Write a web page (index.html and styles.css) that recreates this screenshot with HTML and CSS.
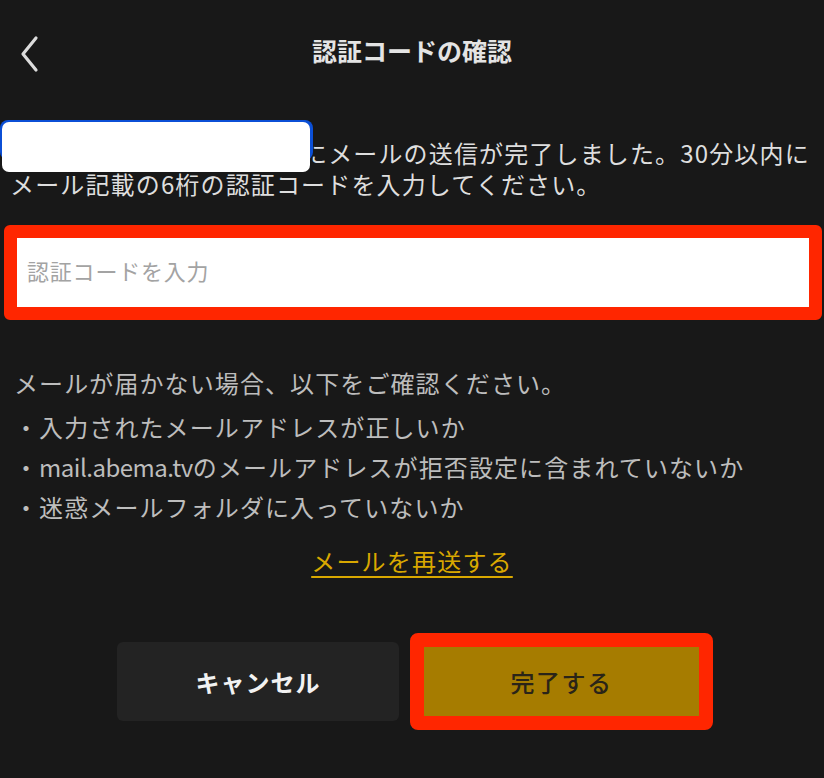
FILE: index.html
```html
<!DOCTYPE html>
<html lang="ja">
<head>
<meta charset="utf-8">
<title>認証コードの確認</title>
<link rel="stylesheet" href="styles.css">
</head>
<body>
<div class="screen">
  <header class="header">
    <button class="back" aria-label="戻る">
      <svg width="24" height="40" viewBox="0 0 24 40"><polyline points="18,4 5,20 18,36" fill="none" stroke="#dcdcdc" stroke-width="3.2" stroke-linecap="round" stroke-linejoin="round"/></svg>
    </button>
    <h1 class="title">認証コードの確認</h1>
    <div></div>
  </header>

  <p class="message"><span class="email" aria-label="メールアドレス（非表示）"></span>にメールの送信が完了しました。30分以内にメール記載の6桁の認証コードを入力してください。</p>

  <div class="input-frame">
    <div class="input"><span class="placeholder">認証コードを入力</span></div>
  </div>

  <div class="help">
    <p class="help-head">メールが届かない場合、以下をご確認ください。</p>
    <ul class="help-list">
      <li>・入力されたメールアドレスが正しいか</li>
      <li>・<span class="latin">mail.abema.tv</span>のメールアドレスが拒否設定に含まれていないか</li>
      <li>・迷惑メールフォルダに入っていないか</li>
    </ul>
  </div>

  <div class="resend"><a class="resend-link">メールを再送する</a></div>

  <div class="actions">
    <button class="btn-cancel">キャンセル</button>
    <div class="done-frame"><button class="btn-done">完了する</button></div>
  </div>
</div>
</body>
</html>
```

FILE: styles.css
```css
* { box-sizing: border-box; }
html, body {
  margin: 0;
  padding: 0;
  background: #181818;
}
body {
  width: 824px;
  height: 778px;
  overflow: hidden;
  font-family: "Noto Sans CJK JP", "Noto Sans", sans-serif;
  color: #dcdcdc;
}
.screen {
  display: flex;
  flex-direction: column;
}
.header {
  height: 104px;
  display: grid;
  grid-template-columns: 60px 1fr 60px;
  align-items: center;
}
.back {
  background: none;
  border: 0;
  padding: 4px 0 0 18px;
  display: flex;
  align-items: center;
}
.title {
  margin: 0;
  text-align: center;
  font-size: 25px;
  font-weight: 700;
  color: #e4e4e4;
  line-height: 1;
  padding-bottom: 4px;
}
.message {
  margin: 33px 0 0;
  padding: 0 10px;
  font-size: 24px;
  line-height: 31px;
  letter-spacing: 1.15px;
  color: #dedede;
}
.email {
  position: relative;
  display: inline-block;
  width: 303px;
  height: 31px;
  vertical-align: top;
  margin-left: -10px;
}
.email::before {
  content: "";
  position: absolute;
  left: 0;
  top: -17px;
  width: 313px;
  height: 40px;
  background: #0b4fd6;
  border-radius: 8px;
}
.email::after {
  content: "";
  position: absolute;
  left: 2px;
  top: -15px;
  width: 308px;
  height: 50px;
  background: #ffffff;
  border-radius: 7px;
}
.input-frame {
  margin: 26px 2px 0 4px;
  border: 13px solid #ff2600;
  border-radius: 6px;
}
.input {
  height: 69px;
  background: #ffffff;
  display: flex;
  align-items: center;
  padding: 0 0 5px 10px;
}
.placeholder {
  font-size: 22px;
  color: #a3a3a3;
  letter-spacing: 0.8px;
}
.help {
  margin-top: 43px;
  padding: 0 14px;
  color: #bdbdbd;
  font-size: 24px;
  letter-spacing: 1.1px;
}
.help-head {
  margin: 0 0 4px;
  line-height: 40px;
}
.help-list {
  list-style: none;
  margin: 0;
  padding: 0;
  line-height: 40px;
}
.latin {
  letter-spacing: -0.5px;
}
.resend {
  margin-top: 14px;
  text-align: center;
  line-height: 40px;
}
.resend-link {
  font-size: 24px;
  letter-spacing: 1.2px;
  color: #d9a800;
  text-decoration: underline;
  text-decoration-thickness: 2px;
  text-underline-offset: 5px;
}
.actions {
  margin-top: 49px;
  padding-left: 117px;
  display: flex;
  align-items: center;
  gap: 11px;
}
.btn-cancel {
  width: 282px;
  height: 79px;
  border: 0;
  border-radius: 6px;
  background: #232323;
  color: #f2f2f2;
  font-family: inherit;
  font-size: 24px;
  font-weight: 700;
  letter-spacing: 1px;
}
.done-frame {
  width: 303px;
  height: 97px;
  border: 14px solid #ff2600;
  border-radius: 8px;
  display: flex;
}
.btn-done {
  flex: 1;
  border: 0;
  border-radius: 0;
  background: #a67c00;
  color: #2a2418;
  font-family: inherit;
  font-size: 24px;
  font-weight: 500;
  letter-spacing: 1.5px;
}
```
